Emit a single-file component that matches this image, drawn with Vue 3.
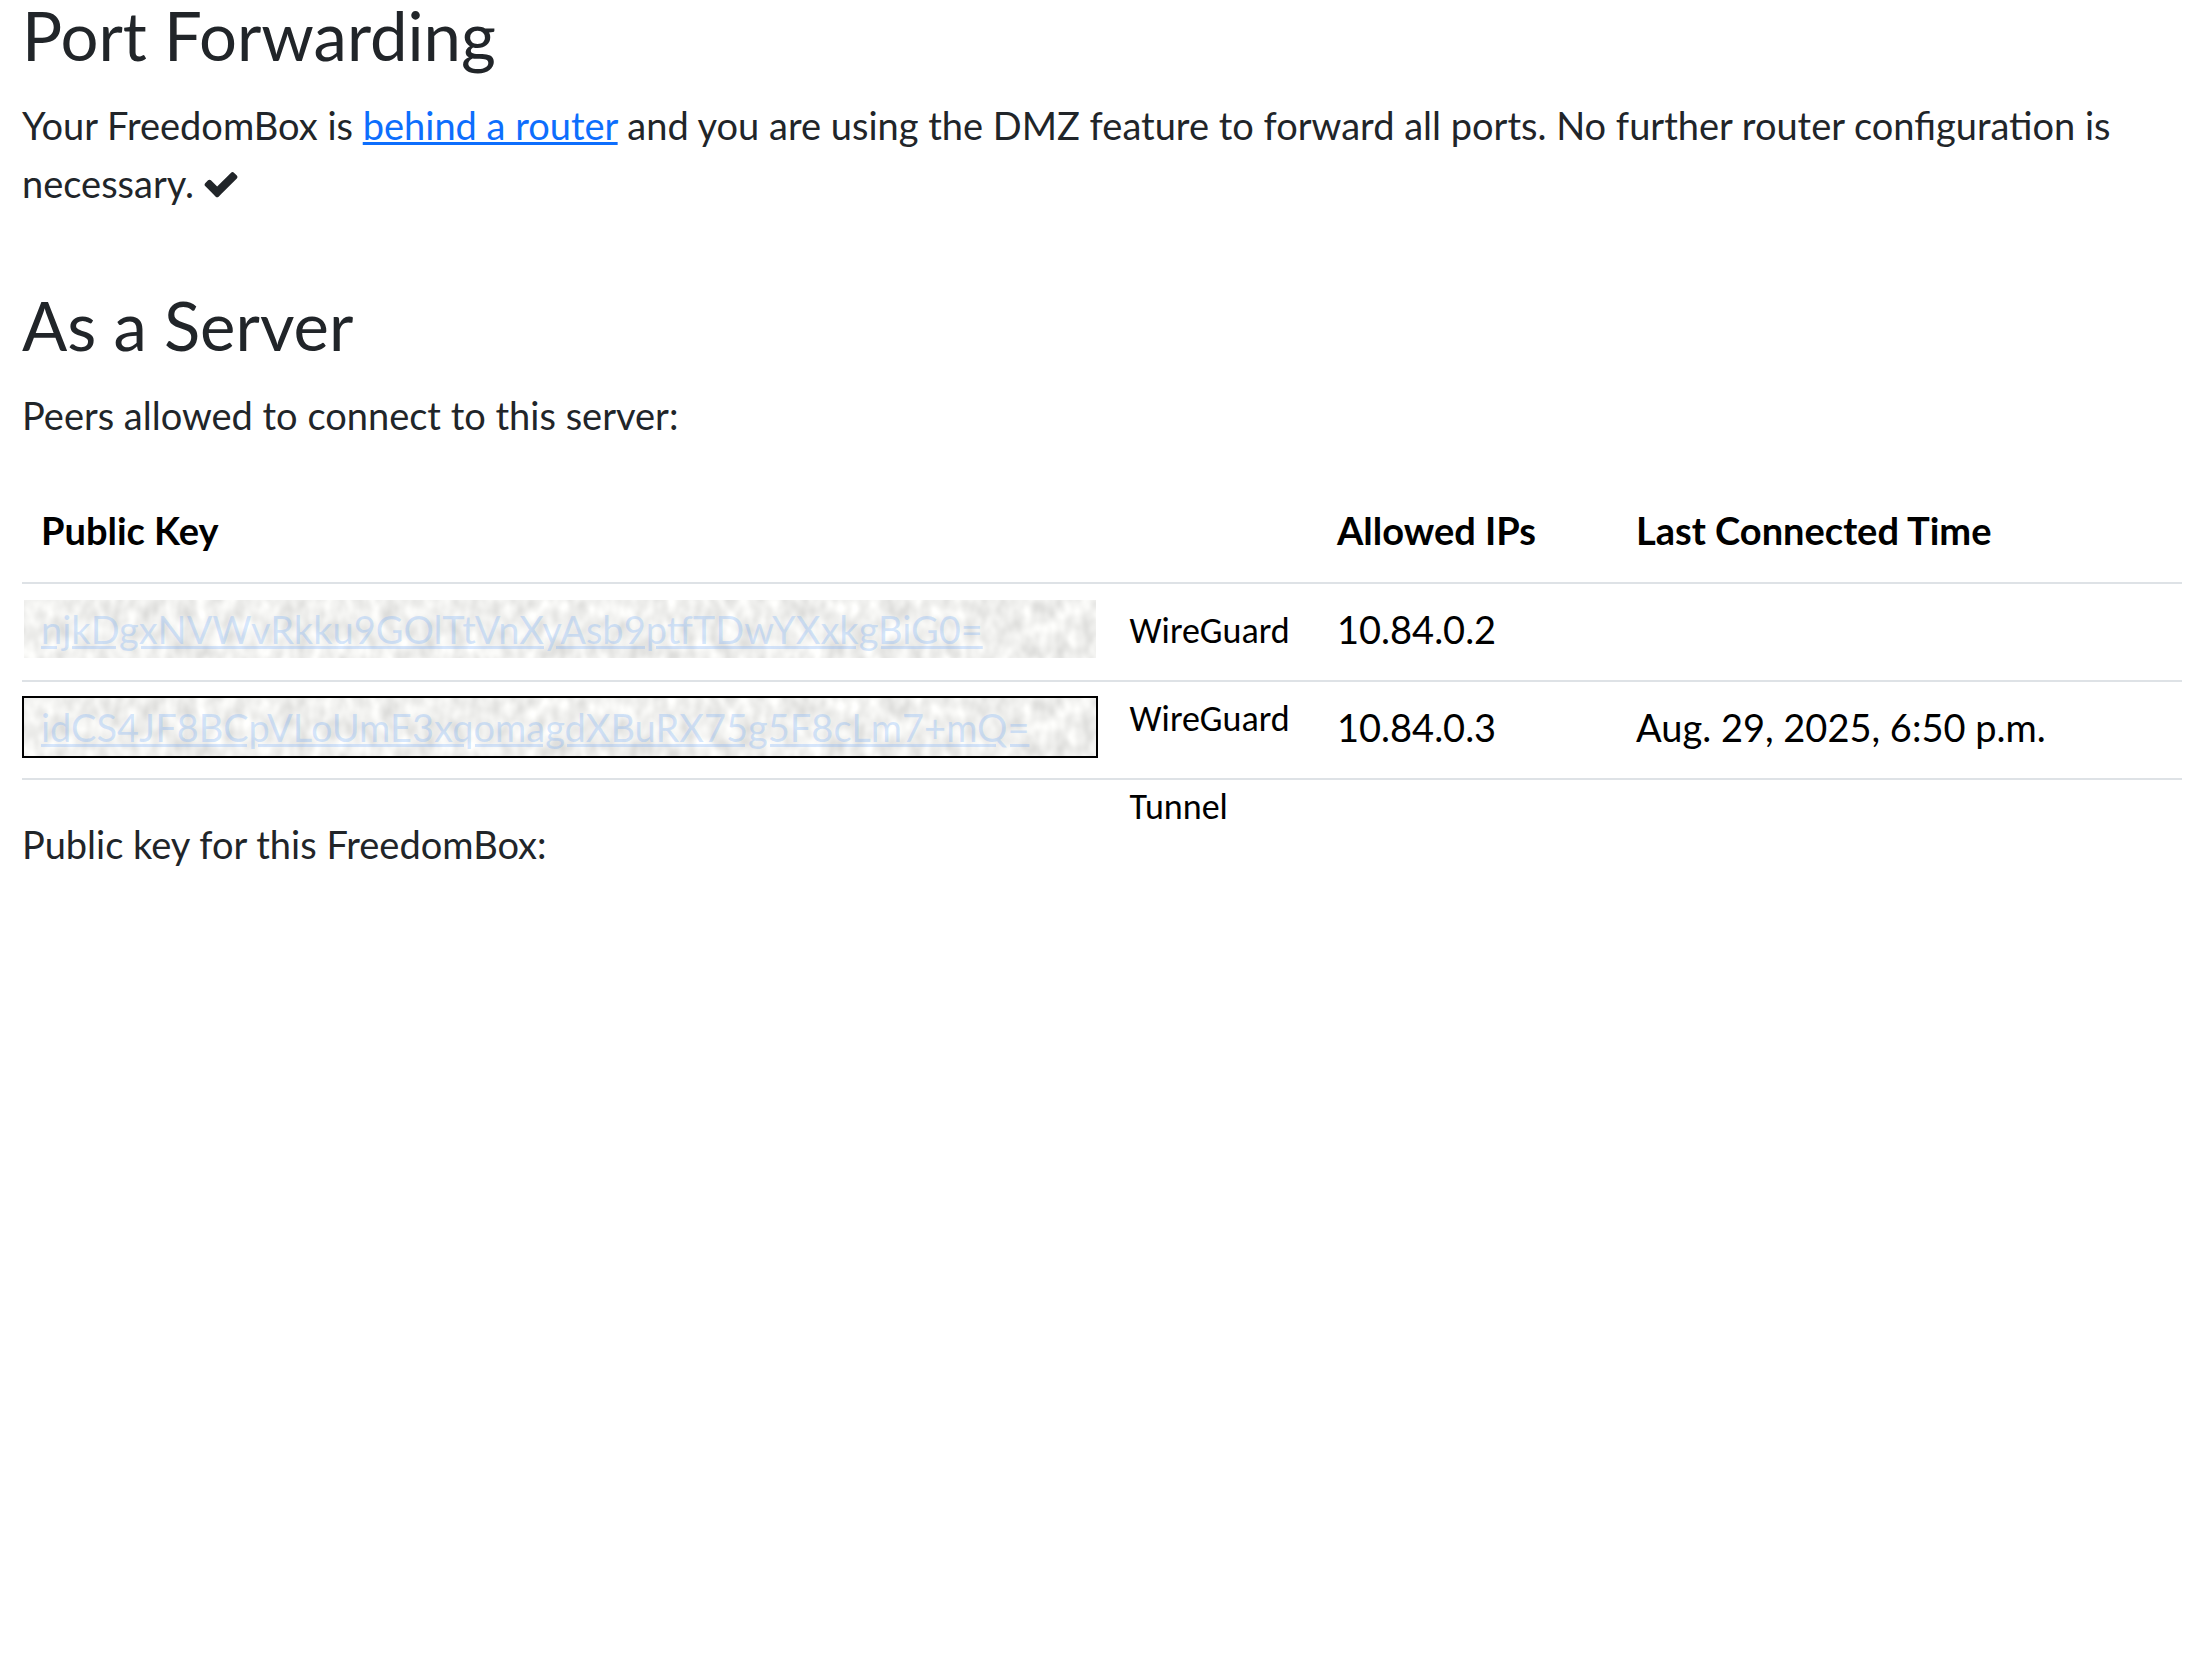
<script setup>
const peers = [
  { key: 'njkDgxNVWvRkku9GOlTtVnXyAsb9ptfTDwYXxkgBiG0=', ip: '10.84.0.2', seen: '', outlined: false },
  { key: 'idCS4JF8BCpVLoUmE3xqomagdXBuRX75g5F8cLm7+mQ=', ip: '10.84.0.3', seen: 'Aug. 29, 2025, 6:50 p.m.', outlined: true },
]
const notes = ['WireGuard', 'WireGuard', 'Tunnel']
</script>

<template>
  <main class="page">
    <section>
      <h3>Port Forwarding</h3>
      <p>
        Your FreedomBox is <a href="#router">behind a router</a> and you are using the DMZ feature to
        forward all ports. No further router configuration is necessary.
        <svg class="check" viewBox="0 0 1792 1792" role="img" aria-label="Yes">
          <path d="M1671 566q0 40-28 68l-724 724-136 136q-28 28-68 28t-68-28l-136-136-362-362q-28-28-28-68t28-68l136-136q28-28 68-28t68 28l294 295 656-657q28-28 68-28t68 28l136 136q28 28 28 68z" />
        </svg>
      </p>
    </section>

    <section>
      <h3>As a Server</h3>
      <p>Peers allowed to connect to this server:</p>
      <div class="peers">
        <table>
          <thead>
            <tr>
              <th class="col-key" scope="col">Public Key</th>
              <th class="col-ip" scope="col">Allowed IPs</th>
              <th scope="col">Last Connected Time</th>
            </tr>
          </thead>
          <tbody>
            <tr v-for="(peer, i) in peers" :key="peer.key">
              <td class="key-cell">
                <div class="key" :class="{ outlined: peer.outlined }">
                  <svg class="grain" aria-hidden="true">
                    <filter :id="`grain-${i}`" x="0" y="0" width="100%" height="100%" color-interpolation-filters="sRGB">
                      <feTurbulence type="fractalNoise" baseFrequency="0.07 0.05" numOctaves="2" seed="8" />
                      <feColorMatrix values="0 0 0 0.22 0.83  0 0 0 0.22 0.83  0 0 0 0.22 0.822  0 0 0 0 1" />
                    </filter>
                    <rect width="100%" height="100%" :filter="`url(#grain-${i})`" />
                  </svg>
                  <a href="#peer">{{ peer.key }}</a>
                </div>
              </td>
              <td>{{ peer.ip }}</td>
              <td>{{ peer.seen }}</td>
            </tr>
          </tbody>
        </table>
        <div class="notes">
          <span v-for="(note, i) in notes" :key="i">{{ note }}</span>
        </div>
      </div>
      <p>Public key for this FreedomBox:</p>
    </section>
  </main>
</template>

<style>
body {
  margin: 0;
  background: #fff;
}
</style>

<style scoped>
.page {
  padding: 0 13px 0 22px;
  font-family: Lato, 'Liberation Sans', sans-serif;
  font-size: 38px;
  line-height: 58px;
  color: #212529;
}
h3 {
  margin: 0 0 26px;
  font-size: 67px;
  font-weight: 400;
  line-height: 70px;
}
p {
  margin: 0 0 38px;
}
section + section {
  padding-top: 40px;
}
a {
  color: #0d6efd;
}
.check {
  width: 38px;
  height: 38px;
  margin-left: -2px;
  vertical-align: -5px;
  fill: #212529;
}
.peers {
  position: relative;
  margin-bottom: 35px;
}
table {
  width: 100%;
  table-layout: fixed;
  border-collapse: collapse;
  color: #000;
}
th,
td {
  box-sizing: border-box;
  border-bottom: 2px solid #dee2e6;
  text-align: left;
}
th {
  padding: 19px 19px 23px;
}
td {
  padding: 16px 19px 22px;
}
.col-key {
  width: 60%;
}
.col-ip {
  width: 299px;
}
.key-cell {
  padding-left: 2px;
}
.key {
  position: relative;
  max-width: 1072px;
  box-sizing: border-box;
  padding-left: 17px;
  white-space: nowrap;
}
.key.outlined {
  outline: 2px solid #000;
}
.grain {
  position: absolute;
  inset: 0;
  width: 100%;
  height: 100%;
}
.key a {
  position: relative;
  color: rgba(110, 170, 250, 0.28);
}
.notes {
  position: absolute;
  top: 105px;
  left: 51%;
  display: flex;
  flex-direction: column;
  padding-left: 6px;
  font-family: Carlito, Lato, sans-serif;
  font-size: 36px;
  line-height: 88px;
  color: #000;
}
</style>
